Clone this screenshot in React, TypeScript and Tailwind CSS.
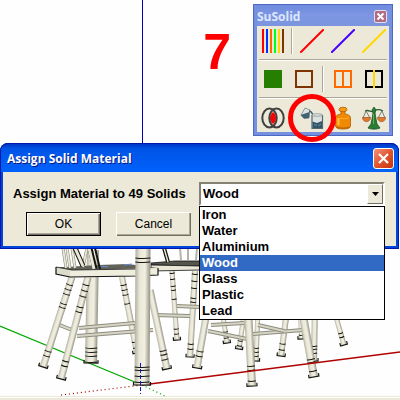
import { useState } from "react";
import type { ReactNode } from "react";

const materials = ["Iron", "Water", "Aluminium", "Wood", "Glass", "Plastic", "Lead"];

type LegProps = { from: [number, number]; to: [number, number]; w: number; rings?: number[] };

const backLegs: LegProps[] = [
  { from: [93, 250], to: [91, 363], w: 12, rings: [98, 102, 106, 112] },
  { from: [122, 277], to: [137, 353], w: 6, rings: [8, 13, 18, 27, 66, 72] },
  { from: [172, 271], to: [177, 340], w: 5, rings: [2, 8, 15, 19, 28, 58, 63] },
  { from: [195, 271], to: [190, 357], w: 6, rings: [3, 10, 17, 27, 31, 73, 78] },
  { from: [222, 310], to: [227, 343], w: 5, rings: [22, 28] },
  { from: [244, 315], to: [239, 349], w: 5, rings: [26, 31] },
  { from: [258, 310], to: [256, 361], w: 5, rings: [38, 42, 46] },
  { from: [287, 310], to: [281, 356], w: 6, rings: [34, 40] },
  { from: [300, 310], to: [301, 339], w: 4, rings: [25] },
  { from: [315, 300], to: [314, 361], w: 6, rings: [46, 49, 53] },
  { from: [334, 310], to: [344, 345], w: 5, rings: [24, 28] },
];

const frontLegs: LegProps[] = [
  { from: [72, 277], to: [43, 367], w: 7, rings: [8, 13, 18, 28, 32, 78, 83] },
  { from: [88, 277], to: [61, 379], w: 7, rings: [8, 14, 20, 31, 36, 87, 92] },
  { from: [150, 290], to: [167, 369], w: 7, rings: [62, 66, 71] },
  { from: [209, 300], to: [197, 368], w: 7, rings: [52, 57] },
  { from: [248, 310], to: [252, 386], w: 8, rings: [56, 60, 71] },
  { from: [302, 310], to: [314, 377], w: 8, rings: [50, 53, 62] },
];

const rails = [
  [57, 324, 72, 330],
  [79, 328, 135, 323],
  [77, 336, 153, 330],
  [153, 315, 190, 316],
  [177, 306, 200, 307],
  [211, 325, 244, 323],
  [208, 331, 247, 339],
  [253, 334, 303, 330],
  [258, 325, 284, 331],
];

function Leg({ from, to, w, rings = [] }: LegProps) {
  const dx = to[0] - from[0];
  const dy = to[1] - from[1];
  const length = Math.hypot(dx, dy);
  const angle = (-Math.atan2(dx, dy) * 180) / Math.PI;
  return (
    <g transform={`translate(${from[0]} ${from[1]}) rotate(${angle})`}>
      <rect x={-w / 2} y="0" width={w} height={length} fill="url(#wood)" />
      {rings.map((y) => (
        <path key={y} d={`M${-w / 2} ${y}Q0 ${y + 1} ${w / 2} ${y}`} fill="none" stroke="#15150f" strokeWidth="1" />
      ))}
      <path
        d={`M${-w / 2 - 1} ${length - 3}V${length}H${w / 2 + 1}V${length - 3}`}
        fill="none"
        stroke="#15150f"
        strokeWidth="1.2"
      />
    </g>
  );
}

function Scene() {
  return (
    <svg viewBox="0 0 400 400" className="absolute inset-x-0 top-0 w-full" aria-hidden="true">
      <defs>
        <linearGradient id="wood">
          <stop offset="0" stopColor="#b3b2a2" />
          <stop offset="0.3" stopColor="#e9e8d8" />
          <stop offset="0.65" stopColor="#f0efe0" />
          <stop offset="1" stopColor="#939284" />
        </linearGradient>
      </defs>
      <path d="M142.5 0V150" stroke="#0000b0" strokeWidth="1" />
      <path d="M0 326L142 385" stroke="#00a800" strokeWidth="1.3" />
      <path d="M142 385L165 396" stroke="#00a800" strokeWidth="1.2" strokeDasharray="1 3" />
      <path d="M61 395L142 385" stroke="#a00000" strokeWidth="1.2" strokeDasharray="1 3" />

      {backLegs.map((leg, i) => (
        <Leg key={i} {...leg} />
      ))}
      {rails.map(([x1, y1, x2, y2], i) => (
        <g key={i}>
          <line x1={x1} y1={y1} x2={x2} y2={y2} stroke="#8d8c7e" strokeWidth="4" />
          <line x1={x1} y1={y1} x2={x2} y2={y2} stroke="#d6d5c5" strokeWidth="2" />
        </g>
      ))}
      {frontLegs.map((leg, i) => (
        <Leg key={i} {...leg} />
      ))}
      <path d="M142 385L400 352" stroke="#b00000" strokeWidth="1.3" />

      {/* seats */}
      <path d="M151 263L175 261H240V265L199 266L151 265Z" fill="#55554e" stroke="#111" strokeWidth="0.8" />
      <path d="M151 265L200 266V270L151 271Z" fill="#e9e8d8" stroke="#111" strokeWidth="0.8" />
      <path d="M56 267H66L98 265L128 264L158 268V271L70 270Z" fill="#62625a" />
      <path d="M56 267L72 270L158 268V275L136 276L70 277L56 274Z" fill="#efeede" />
      <path d="M70 270V277L56 274V267Z" fill="#dddccc" />
      <path d="M56 267L72 270L136 269" fill="none" stroke="#111" strokeWidth="0.8" />
      <path d="M56 267V274L70 277L136 276L158 275V268" fill="none" stroke="#111" strokeWidth="1.2" />
      <path d="M100 266L108 267M124 265L132 264" stroke="#6b8cd8" strokeWidth="1" />

      {/* chair backs */}
      <path d="M63 248L66 268M67 248L70 268M72 248L75 268M87 248L83 267" stroke="#8d8c7e" strokeWidth="3" />
      <path d="M63 248L66 268M67 248L70 268M72 248L75 268M87 248L83 267" stroke="#e9e8d8" strokeWidth="1.8" />
      <path d="M75 248L83 266M90 248L95 269" stroke="#15150f" strokeWidth="5" />
      <path d="M75 248L83 266M89 248L94 269" stroke="#e9e8d8" strokeWidth="3" />
      <path d="M95 248L100 269" stroke="#15150f" strokeWidth="2" />
      <path d="M164 248L168 262" stroke="#15150f" strokeWidth="4" />
      <path d="M164 248L168 262" stroke="#e9e8d8" strokeWidth="1.4" />
      <path d="M180 248L181 260M188 248L188 260M197 248L196 260" stroke="#b5b4a4" strokeWidth="2" />

      <Leg from={[143, 248]} to={[142, 385]} w={15} rings={[10, 14, 119, 122, 128, 134]} />
      <path d="M140.500 363V394" stroke="#1414c8" strokeWidth="1" strokeDasharray="4 2" />
    </svg>
  );
}

function ToolButton({ label, children }: { label: string; children: ReactNode }) {
  return (
    <button type="button" aria-label={label} className="relative flex w-[31px] items-center justify-center">
      <svg viewBox="0 0 24 24" className="h-6 w-6" fill="none" aria-hidden="true">
        {children}
      </svg>
    </button>
  );
}

function Divider() {
  return (
    <div className="flex w-2 justify-center">
      <div className="w-[2px] border-r border-l border-r-white border-l-[#aca899]" />
    </div>
  );
}

function Palette() {
  return (
    <section className="w-[140px] border-4 border-t-0 border-[#7590e0] bg-[#ece9d8] outline -outline-offset-1 outline-[#4e69c4]">
      <header className="flex h-[22px] items-center justify-between bg-gradient-to-b from-[#6d89dc] via-[#7d97e3] to-[#7b94dd] pt-[3px] pr-[2px]">
        <h2 className="font-['Open_Sans','Noto_Sans',sans-serif] text-[12px] font-bold text-[#dde6fc]">SuSolid</h2>
        <button
          type="button"
          aria-label="Close SuSolid"
          className="flex h-[13px] w-[13px] items-center justify-center rounded-[2px] border border-[#e0dff0] bg-[#b16b83]"
        >
          <svg viewBox="0 0 9 9" className="h-[9px] w-[9px]" aria-hidden="true">
            <path d="M1.500 1.500L7.500 7.500M7.500 1.500L1.500 7.500" stroke="#fff" strokeWidth="2" />
          </svg>
        </button>
      </header>

      <div className="mx-[2px] h-[34px] border-b border-[#aca899] pt-[2px] pb-[5px]">
        <div className="-mx-[2px] flex h-full">
          <ToolButton label="Lines">
            <path d="M2 0V24" stroke="#f00" strokeWidth="2" />
            <path d="M6 0V24" stroke="#0032ff" strokeWidth="2" />
            <path d="M10 0V24" stroke="#ff6a00" strokeWidth="2" />
            <path d="M14 0V24" stroke="#00ff21" strokeWidth="2" />
            <path d="M18 0V24" stroke="#ffd800" strokeWidth="2" />
            <path d="M22 0V24" stroke="#7f3300" strokeWidth="2" />
          </ToolButton>
          <Divider />
          <ToolButton label="Red line">
            <path d="M1 23L23 1" stroke="#f00" strokeWidth="2" strokeLinecap="square" />
          </ToolButton>
          <ToolButton label="Blue line">
            <path d="M1 23L23 1" stroke="#4800ff" strokeWidth="2" strokeLinecap="square" />
          </ToolButton>
          <ToolButton label="Yellow line">
            <path d="M1 23L23 1" stroke="#ffd800" strokeWidth="2" strokeLinecap="square" />
          </ToolButton>
        </div>
      </div>

      <div className="mx-[2px] h-[38px] border-t border-b border-t-white border-b-[#aca899] py-[5px]">
        <div className="-mx-[2px] flex h-full">
          <ToolButton label="Solid face">
            <path d="M3 3H21V21H3Z" fill="#267f00" />
          </ToolButton>
          <ToolButton label="Outline">
            <path d="M4 4H20V20H4Z" stroke="#7f3300" strokeWidth="2" />
          </ToolButton>
          <Divider />
          <ToolButton label="Split">
            <path d="M4 4H20V20H4ZM12 4V20" stroke="#ff6a00" strokeWidth="2" />
          </ToolButton>
          <ToolButton label="Section">
            <path d="M4 4H20V20H4Z" stroke="#000" strokeWidth="2" />
            <path d="M12 3V21" stroke="#ffd800" strokeWidth="2" />
          </ToolButton>
        </div>
      </div>

      <div className="mx-[2px] h-[34px] border-t border-white pt-1">
        <div className="-mx-[2px] flex h-full">
          <ToolButton label="Intersect">
            <path d="M12 6C16 9 16 15 12 18C8 15 8 9 12 6Z" fill="#f00" />
            <ellipse cx="8.500" cy="12" rx="7.200" ry="9.500" stroke="#404040" strokeWidth="2" />
            <ellipse cx="15.500" cy="12" rx="7.200" ry="9.500" stroke="#404040" strokeWidth="2" />
          </ToolButton>
          <div className="w-2" />
          <div className="relative flex">
            <ToolButton label="Assign material">
              <path d="M1 9L5 2L10 4L9 12L4 12.500Z" fill="#dfe3df" stroke="#75878c" strokeWidth="0.800" />
              <path d="M0.500 9L9.500 6L9 12L4 12.500Z" fill="#3f6272" />
              <path d="M9 5C12 5 13.500 8 14 16" stroke="#3f6272" strokeWidth="1.600" />
              <path d="M12 9V22.500H22.500V9" fill="#dce2df" stroke="#536a74" strokeWidth="1.200" />
              <path d="M12.500 15.500L17 17L22 15V22H12.500Z" fill="#31566a" />
              <path d="M14 19H17M18 20L21 18" stroke="#718f9b" />
              <ellipse cx="17.200" cy="9" rx="5.300" ry="1.200" fill="#eff1e8" stroke="#7a8b91" strokeWidth="0.800" />
            </ToolButton>
            <div className="pointer-events-none absolute top-1/2 left-1/2 z-10 h-12 w-12 -translate-1/2 rounded-full border-5 border-[#fe0000]" />
          </div>
          <ToolButton label="Weight">
            <path d="M10 4H14V8C18 8.500 19.500 10 19.500 12V20C19 22.500 16 23 12 23S5 22.500 4.500 20V12C4.500 10 6 8.500 10 8Z" fill="#f08a05" stroke="#b35d00" strokeWidth="0.800" />
            <ellipse cx="12" cy="3.500" rx="4" ry="2.300" fill="#f79b17" stroke="#b35d00" strokeWidth="0.800" />
            <path d="M7.500 12V19" stroke="#ffc14a" strokeWidth="2" />
            <path d="M9 12C12 13 15 13 18 11.500" stroke="#ffb030" />
            <path d="M5 21C9 22.500 15 22.500 19 21" stroke="#b35d00" />
          </ToolButton>
          <ToolButton label="Balance">
            <path d="M3 5C7 3 9 7 12 5S17 3 21 5" stroke="#2e5c35" strokeWidth="1.300" />
            <path d="M4 5L1 12M4 5L8 12M20 5L16 12M20 5L23 12" stroke="#5b6961" strokeWidth="0.800" />
            <path d="M0.500 11.500H8.500C8.500 17 0.500 17 0.500 11.500ZM15.500 11.500H23.500C23.500 17 15.500 17 15.500 11.500Z" fill="#e07a28" stroke="#a65a35" strokeWidth="0.800" />
            <path d="M12 1L14 4L13 7L14 13L15 18L18 22C15 23.500 9 23.500 6 22L9 18L10 13L11 7L10 4Z" fill="#2a7d33" stroke="#17562a" strokeWidth="0.800" />
            <path d="M11.500 8V18" stroke="#66b04e" />
          </ToolButton>
        </div>
      </div>
    </section>
  );
}

function MaterialPicker() {
  const [material, setMaterial] = useState("Wood");
  return (
    <div className="relative h-6 flex-1">
      <select
        id="material"
        value={material}
        onChange={(e) => setMaterial(e.target.value)}
        className="block h-6 w-full appearance-none border-2 border-t-[#848274] border-r-white border-b-white border-l-[#848274] bg-white pl-[2px] text-[13px] font-bold text-black"
      >
        {materials.map((name) => (
          <option key={name}>{name}</option>
        ))}
      </select>
      <div className="pointer-events-none absolute top-[2px] right-[2px] flex h-5 w-4 items-center justify-center border border-t-white border-r-[#716f64] border-b-[#716f64] border-l-white bg-[#ece9d8]">
        <svg viewBox="0 0 7 4" className="h-1 w-[7px]" aria-hidden="true">
          <path d="M0 0H7L3.500 4Z" fill="#000" />
        </svg>
      </div>
      <ul role="listbox" aria-label="Materials" className="absolute inset-x-0 top-6 border border-black bg-white">
        {materials.map((name) => (
          <li
            key={name}
            role="option"
            aria-selected={name === material}
            onClick={() => setMaterial(name)}
            className="px-[2px] text-[13px] leading-4 font-bold text-black aria-selected:bg-[#316ac5] aria-selected:text-white"
          >
            {name}
          </li>
        ))}
      </ul>
    </div>
  );
}

function AssignDialog() {
  return (
    <section
      role="dialog"
      aria-labelledby="dialog-title"
      className="relative mr-px rounded-t-lg border-3 border-t-0 border-[#0044dc] bg-[#ece9d8] outline -outline-offset-1 outline-[#0019a8]"
    >
      <header className="-mx-[3px] flex h-[29px] items-center justify-between rounded-t-lg bg-gradient-to-b from-[#0030c0] via-[#0054e6] via-20% to-[#0062fc] pt-[2px] pr-[5px] pl-[7px]">
        <h1 id="dialog-title" className="font-['Open_Sans','Noto_Sans',sans-serif] text-[12px] font-bold text-white [text-shadow:1px_1px_#0a1883]">
          Assign Solid Material
        </h1>
        <button
          type="button"
          aria-label="Close"
          className="flex h-[21px] w-[21px] items-center justify-center rounded-[3px] border border-white bg-gradient-to-br from-[#ee9377] via-[#e2552f] to-[#c63408]"
        >
          <svg viewBox="0 0 13 13" className="h-[13px] w-[13px]" aria-hidden="true">
            <path d="M2 2L11 11M11 2L2 11" stroke="#fff" strokeWidth="2.200" />
          </svg>
        </button>
      </header>
      <form onSubmit={(e) => e.preventDefault()} className="py-[10px] pr-[11px] pl-[10px]">
        <div className="flex items-center">
          <label htmlFor="material" className="w-[186px] text-[13px] font-bold whitespace-nowrap text-black">
            Assign Material to 49 Solids
          </label>
          <MaterialPicker />
        </div>
        <div className="mt-[6px] flex gap-[15px] pl-[13px] text-[12px] text-black">
          <button
            type="submit"
            className="h-6 w-[75px] border border-black shadow-[inset_1px_1px_#fff,inset_-1px_-1px_#716f64,inset_-2px_-2px_#aca899]"
          >
            OK
          </button>
          <button
            type="button"
            className="h-6 w-[75px] shadow-[inset_1px_1px_#fff,inset_-1px_-1px_#716f64,inset_-2px_-2px_#aca899]"
          >
            Cancel
          </button>
        </div>
      </form>
    </section>
  );
}

export default function App() {
  return (
    <main className="relative flex min-h-screen flex-col bg-[#fefefe] font-['Liberation_Sans',Arial,sans-serif]">
      <Scene />
      <div className="relative z-10 flex justify-end gap-[22px] pt-1 pr-[7px] pb-[7px]">
        <p className="mt-[23px] text-[50px] leading-[50px] font-bold text-[#fe0000]">7</p>
        <Palette />
      </div>
      <AssignDialog />
      <footer className="mt-auto h-1 border-t border-[#ece9d8] bg-[#ece9d8] shadow-[inset_0_1px_#fff]" />
    </main>
  );
}
